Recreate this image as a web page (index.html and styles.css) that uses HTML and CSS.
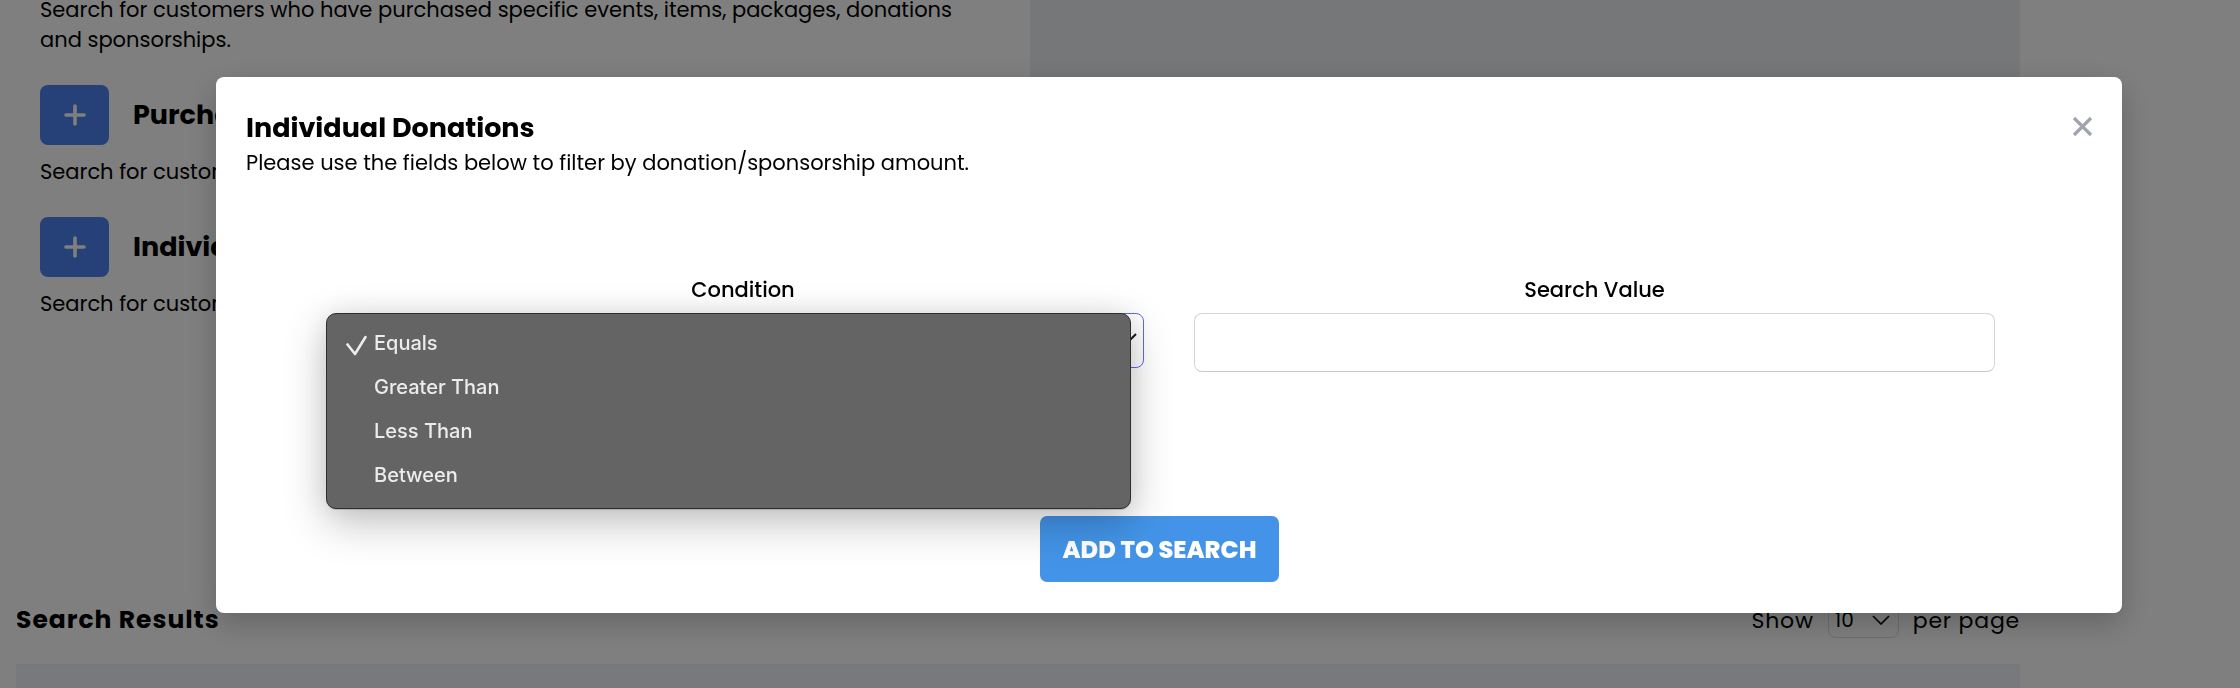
FILE: index.html
```html
<!DOCTYPE html>
<html lang="en">
<head>
<meta charset="utf-8">
<title>Customer Search</title>
<link rel="stylesheet" href="styles.css">
</head>
<body>
<div class="page">
  <div class="top">
    <section class="filters">
      <p class="intro">Search for customers who have purchased specific events, items, packages, donations and sponsorships.</p>
      <div class="filter">
        <div class="filter-head">
          <button class="add-btn" type="button"><svg width="22" height="22" viewBox="0 0 22 22"><path d="M11 2v18M2 11h18" stroke="#ffffff" stroke-width="3.6" stroke-linecap="round"/></svg></button>
          <h3 class="filter-title">Purchased Items</h3>
        </div>
        <p class="filter-desc">Search for customers who have purchased specific events, items or packages.</p>
      </div>
      <div class="filter">
        <div class="filter-head">
          <button class="add-btn" type="button"><svg width="22" height="22" viewBox="0 0 22 22"><path d="M11 2v18M2 11h18" stroke="#ffffff" stroke-width="3.6" stroke-linecap="round"/></svg></button>
          <h3 class="filter-title">Individual Donations</h3>
        </div>
        <p class="filter-desc">Search for customers who have made individual donations or sponsorships.</p>
      </div>
    </section>
    <aside class="panel"></aside>
  </div>
  <div class="results-head">
    <h2 class="results-title">Search Results</h2>
    <div class="per-page">
      <span>Show</span>
      <span class="pp-select"><span>10</span><svg width="18" height="10" viewBox="0 0 18 10"><path d="M1 1l8 8 8-8" fill="none" stroke="#000" stroke-width="1.6"/></svg></span>
      <span>per page</span>
    </div>
  </div>
  <div class="table-head"></div>
</div>

<div class="backdrop">
  <div class="modal">
    <button class="close" type="button" aria-label="Close"><svg width="21" height="21" viewBox="0 0 21 21"><path d="M2 2l17 17M19 2L2 19" stroke="#a0a4ad" stroke-width="3.2"/></svg></button>
    <h2 class="modal-title">Individual Donations</h2>
    <p class="modal-sub">Please use the fields below to filter by donation/sponsorship amount.</p>
    <div class="fields">
      <div class="field">
        <label class="field-label">Condition</label>
        <div class="select">
          <svg class="select-chev" width="20" height="11" viewBox="0 0 20 11"><path d="M1 1l9 9 9-9" fill="none" stroke="#1a1a1a" stroke-width="2"/></svg>
          <ul class="options">
            <li class="option selected"><svg class="check" width="22" height="21" viewBox="0 0 22 21"><path d="M1.5 9.5l7.5 9.5L19.5 2" fill="none" stroke="#ececec" stroke-width="2.6" stroke-linecap="round" stroke-linejoin="round"/></svg>Equals</li>
            <li class="option">Greater Than</li>
            <li class="option">Less Than</li>
            <li class="option">Between</li>
          </ul>
        </div>
      </div>
      <div class="field">
        <label class="field-label">Search Value</label>
        <div class="input"></div>
      </div>
    </div>
    <div class="actions">
      <button class="primary" type="button">ADD TO SEARCH</button>
    </div>
  </div>
</div>
</body>
</html>
```

FILE: styles.css
```css
* { box-sizing: border-box; }

html, body { margin: 0; }

body {
  width: 2240px;
  height: 688px;
  overflow: hidden;
  position: relative;
  background: #ffffff;
  color: #000;
  font-family: "Poppins", "Inter", "Noto Sans", sans-serif;
}

/* ---------- page behind the modal ---------- */
.page {
  padding: 0 220px 0 16px;
}

.top {
  display: flex;
  height: 598px;
}

.filters {
  width: 1014px;
  padding: 0 50px 0 24px;
}

.panel {
  flex: 1;
  height: 570px;
  background: #eceef2;
}

.intro {
  margin: -5px 0 0;
  font-size: 21px;
  line-height: 30px;
}

.filter { margin-top: 30px; }

.filter-head {
  display: flex;
  align-items: center;
  gap: 24px;
}

.add-btn {
  width: 69px;
  height: 60px;
  padding: 0;
  border: 0;
  border-radius: 8px;
  background: #4c82ee;
  display: flex;
  align-items: center;
  justify-content: center;
}

.filter-title {
  margin: 0;
  font-size: 27px;
  line-height: 32px;
  font-weight: 700;
  white-space: nowrap;
}

.filter-desc {
  margin: 12px 0 0;
  font-size: 21px;
  line-height: 30px;
  white-space: nowrap;
}

.results-head {
  display: flex;
  justify-content: space-between;
  align-items: center;
  height: 44px;
}

.results-title {
  margin: 0;
  font-size: 25px;
  line-height: 30px;
  font-weight: 700;
  letter-spacing: 1px;
}

.per-page {
  display: flex;
  align-items: center;
  gap: 14px;
  font-size: 22px;
  letter-spacing: 0.8px;
}

.pp-select {
  width: 71px;
  height: 36px;
  border: 1px solid #dcdcdc;
  border-radius: 8px;
  display: flex;
  align-items: center;
  justify-content: space-between;
  padding: 0 8px 0 6px;
  font-size: 20px;
  letter-spacing: 0;
}

.table-head {
  margin-top: 22px;
  height: 24px;
  border-top: 1px solid #d6f6ff;
  background: #eef3f9;
}

/* ---------- modal ---------- */
.backdrop {
  position: fixed;
  inset: 0;
  background: rgba(0, 0, 0, 0.5);
  padding: 77px 0 0 216px;
}

.modal {
  position: relative;
  width: 1906px;
  background: #ffffff;
  border-radius: 8px;
  padding: 35px 30px 31px;
  box-shadow: 0 10px 30px rgba(0, 0, 0, 0.22);
}

.close {
  position: absolute;
  top: 39px;
  right: 29px;
  width: 21px;
  height: 21px;
  padding: 0;
  border: 0;
  background: none;
}

.close svg { display: block; }

.modal-title {
  margin: 0;
  font-size: 27px;
  line-height: 32px;
  font-weight: 700;
}

.modal-sub {
  margin: 4px 0 0;
  font-size: 21px;
  line-height: 30px;
}

.fields {
  display: grid;
  grid-template-columns: 802px 801px;
  column-gap: 50px;
  align-items: start;
  margin: 97px 0 0 96px;
}

.field-label {
  display: block;
  margin-bottom: 8px;
  text-align: center;
  font-size: 21px;
  line-height: 30px;
  font-weight: 500;
}

.select {
  position: relative;
  height: 55px;
  border: 1px solid #6366f1;
  border-radius: 8px;
  display: flex;
  align-items: center;
  justify-content: flex-end;
  padding: 0 6px 0 16px;
  font-size: 20px;
}

.select-chev { margin-top: -5px; }

.options {
  position: absolute;
  left: -17px;
  top: -1px;
  width: 805px;
  height: 196px;
  margin: 0;
  padding: 7px 0 0;
  list-style: none;
  background: #646464;
  border: 1px solid #2e2e2e;
  border-radius: 10px;
  box-shadow: 0 1px 0 rgba(0, 0, 0, 0.15), 0 14px 44px rgba(0, 0, 0, 0.24), 0 0 24px rgba(0, 0, 0, 0.08);
  font-family: "Inter", "Roboto", sans-serif;
  font-size: 20px;
  font-weight: 500;
  color: #ececec;
}

.option {
  position: relative;
  height: 44px;
  line-height: 44px;
  padding-left: 47px;
}

.check {
  position: absolute;
  left: 19px;
  top: 14px;
}

.input {
  height: 59px;
  border: 1px solid #d4d4dc;
  border-bottom-color: #c8c8d2;
  border-radius: 8px;
  background: #fff;
}

.actions {
  display: flex;
  justify-content: center;
  margin-top: 144px;
  padding-right: 19px;
}

.primary {
  width: 239px;
  height: 66px;
  border: 0;
  border-radius: 7px;
  background: #4394e8;
  color: #ffffff;
  font-family: inherit;
  font-size: 24px;
  font-weight: 800;
}
```
